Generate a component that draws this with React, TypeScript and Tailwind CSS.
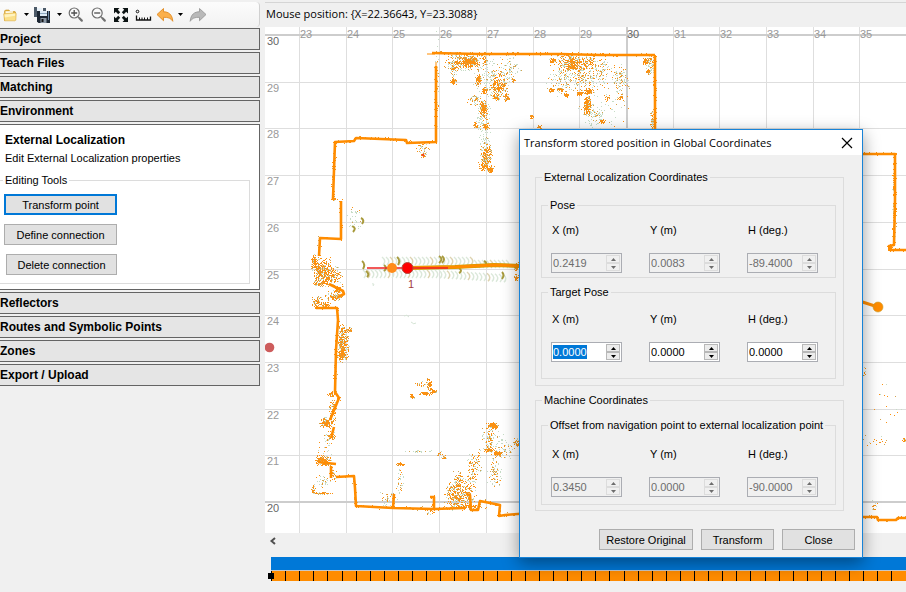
import { useEffect, useLayoutEffect, useRef, useState } from "react";
import type { ReactNode } from "react";

const UI = "font-['Liberation_Sans',Arial,sans-serif]";
const TITLE = "font-['Open_Sans','Noto_Sans',sans-serif] text-[11px] leading-4";

/* ---------- Toolbar icons ---------- */

function FolderIcon() {
  return (
    <svg width="16" height="16" viewBox="0 0 16 16">
      <path d="M2.5 13.5V4l1-1h3.5l1 1.500h5l.5.5v1z" fill="#e3b23c" stroke="#c9962a" strokeWidth=".6" />
      <path d="M3.500 4.200h7.500v3h-7.500z" fill="#fffbe8" />
      <path d="M1.700 6.800l11-1 1.500.6-.4 6.800-.9.600H2.600z" fill="#fbe08a" stroke="#dba93a" strokeWidth=".6" />
      <path d="M2.600 7.600l10.500-.8-.1 2-10.200 1.600z" fill="#fff3c0" />
    </svg>
  );
}

function SaveIcon() {
  return (
    <svg width="18" height="18" viewBox="0 0 18 18">
      <path d="M1 1h3v7h6V2h3v9H1z" fill="#4d5a68" />
      <path d="M4 2h5v5H4z" fill="#e8f1f8" />
      <path d="M4 5h13v12H5.500L4 15.500z" fill="#1d2733" />
      <path d="M7 5h7v5H7z" fill="#dceaf5" />
      <path d="M7 7h7v1H7z" fill="#8fa9c0" />
      <path d="M7.500 12h6v5h-6z" fill="#8c98a5" />
      <path d="M8.500 13h2v3h-2z" fill="#111" />
      <path d="M15 5h1v9h-1z" fill="#6f8aa5" />
    </svg>
  );
}

function ZoomIcon({ plus }: { plus?: boolean }) {
  return (
    <svg width="16" height="16" viewBox="0 0 16 16" fill="none" stroke="#707070">
      <circle cx="6.200" cy="6" r="5" strokeWidth="1.200" fill="#fafafa" />
      <path d="M9.800 9.600l1.800 1.800" strokeWidth="1.300" />
      <path d="M11.500 11.300l2.300 2.300" strokeWidth="2.200" strokeLinecap="round" />
      <path d={plus ? "M3.200 6h6M6.200 3v6" : "M3.200 6h6"} stroke="#505050" strokeWidth="1.300" />
    </svg>
  );
}

function ExpandIcon() {
  return (
    <svg width="16" height="16" viewBox="0 0 16 16" fill="#0c1414">
      <path d="M1 1h5.500L4.800 2.800l2.400 2.400-2 2-2.400-2.400L1 6.500z" />
      <path d="M15 1v5.500l-1.800-1.700-2.400 2.400-2-2 2.400-2.400L9.500 1z" />
      <path d="M1 15V9.500l1.800 1.700 2.400-2.400 2 2-2.400 2.400L6.500 15z" />
      <path d="M15 15H9.500l1.700-1.800-2.400-2.400 2-2 2.400 2.400L15 9.500z" />
    </svg>
  );
}

function RulerIcon() {
  return (
    <svg width="17" height="16" viewBox="0 0 17 16" fill="none" stroke="#111">
      <circle cx="2.500" cy="4.500" r="1.300" />
      <path d="M1.500 8.500v4.500h14V9.500" strokeWidth="1.300" />
      <path d="M4.500 10.500v2.500M7 10.500v2.500M9.500 10.500v2.500M12.500 10.500v2.500" />
    </svg>
  );
}

function CurvedArrow({ flip }: { flip?: boolean }) {
  return (
    <svg width="18" height="16" viewBox="0 0 18 16">
      <path
        d="M1 7.500L7.500 1.500v3.300c5 0 8.700 2.500 9.300 9.500-2-3.200-4.500-4.100-9.300-4v3.400z"
        transform={flip ? "matrix(-1 0 0 1 18 0)" : undefined}
        fill={flip ? "#b9b9b9" : "#fbb04c"}
        stroke={flip ? "#9a9a9a" : "#e08a22"}
        strokeWidth=".9"
        strokeLinejoin="round"
      />
    </svg>
  );
}

function Caret() {
  return (
    <svg width="5" height="3" viewBox="0 0 5 3">
      <path d="M0 0h5L2.500 3z" fill="#000" />
    </svg>
  );
}

function ToolButton({ label, children, className = "" }: { label: string; children: ReactNode; className?: string }) {
  return (
    <button type="button" aria-label={label} className={`flex items-center ${className}`}>
      {children}
    </button>
  );
}

function Toolbar() {
  return (
    <div className="flex h-[25px] w-[260px] items-center rounded-r border-r border-[#d0d0d0] bg-linear-to-b from-[#fcfcfc] to-[#f2f2f2] pl-0.5">
      <ToolButton label="Open"><FolderIcon /></ToolButton>
      <ToolButton label="Open options" className="ml-1.5"><Caret /></ToolButton>
      <ToolButton label="Save" className="ml-1"><SaveIcon /></ToolButton>
      <ToolButton label="Save options" className="ml-1.5"><Caret /></ToolButton>
      <ToolButton label="Zoom in" className="ml-1.5"><ZoomIcon plus /></ToolButton>
      <ToolButton label="Zoom out" className="ml-[7px]"><ZoomIcon /></ToolButton>
      <ToolButton label="Fit to window" className="ml-1.5"><ExpandIcon /></ToolButton>
      <ToolButton label="Measure" className="ml-1.5"><RulerIcon /></ToolButton>
      <ToolButton label="Undo" className="ml-1"><CurvedArrow /></ToolButton>
      <ToolButton label="Undo options" className="ml-1"><Caret /></ToolButton>
      <ToolButton label="Redo" className="ml-1.5"><CurvedArrow flip /></ToolButton>
    </div>
  );
}

/* ---------- Sidebar ---------- */

function SectionHeader({ children }: { children: ReactNode }) {
  return (
    <button
      type="button"
      className="flex h-[22px] w-full items-center border border-l-0 border-[#646464] bg-[#e5e5e5] text-left text-[12px] leading-4 font-bold text-black"
    >
      {children}
    </button>
  );
}

function PushButton({ children, className = "" }: { children: ReactNode; className?: string }) {
  return (
    <button
      type="button"
      className={`flex h-[21px] items-center justify-center bg-[#e1e1e1] text-[11px] leading-4 text-black ${className}`}
    >
      {children}
    </button>
  );
}

function Sidebar() {
  return (
    <aside className="flex w-[260px] shrink-0 flex-col pt-0.5">
      <Toolbar />
      <nav className="mt-px flex flex-col gap-0.5">
        <SectionHeader>Project</SectionHeader>
        <SectionHeader>Teach Files</SectionHeader>
        <SectionHeader>Matching</SectionHeader>
        <SectionHeader>Environment</SectionHeader>
        <section className="h-[166px] border border-l-0 border-[#646464] bg-white pt-[7px]">
          <h2 className="pl-[5px] text-[12px] leading-4 font-bold">External Localization</h2>
          <p className="mt-0.5 pl-[5px] text-[11px] leading-4">Edit External Localization properties</p>
          <fieldset className="mt-[7px] mr-[9px] h-[111px] border border-l-0 border-[#dcdcdc]">
            <legend className="ml-[3px] px-0.5 text-[11px] leading-[14px]">Editing Tools</legend>
            <div className="ml-1 flex w-[113px] flex-col items-end gap-[9px] pt-[7px]">
              <PushButton className="w-full border-2 border-[#0078d7]">Transform point</PushButton>
              <PushButton className="w-full border border-[#adadad]">Define connection</PushButton>
              <PushButton className="w-[111px] border border-[#adadad]">Delete connection</PushButton>
            </div>
          </fieldset>
        </section>
        <SectionHeader>Reflectors</SectionHeader>
        <SectionHeader>Routes and Symbolic Points</SectionHeader>
        <SectionHeader>Zones</SectionHeader>
        <SectionHeader>Export / Upload</SectionHeader>
      </nav>
    </aside>
  );
}

/* ---------- Map ---------- */

function makeRandom(seed: number) {
  let s = seed;
  return () => {
    s = (s * 1664525 + 1013904223) % 4294967296;
    return s / 4294967296;
  };
}

type Wall = [number, number][];

const walls: Wall[] = [
  [[432, 53], [480, 54], [560, 54], [600, 55], [655, 55]],
  [[655, 56], [655, 140]],
  [[436, 66], [436, 142], [407, 143], [406, 140], [356, 138], [354, 141], [335, 142], [334, 170], [333, 199]],
  [[341, 201], [341, 239], [320, 238], [319, 256]],
  [[329, 284], [343, 291], [344, 294], [338, 297]],
  [[316, 308], [337, 308], [338, 320], [336, 350], [335, 392], [339, 398], [330, 420]],
  [[334, 427], [331, 438]],
  [[318, 462], [336, 464]],
  [[331, 466], [331, 478]],
  [[336, 477], [354, 476], [355, 488], [356, 506], [393, 508], [434, 509], [465, 508]],
  [[393, 508], [394, 494]],
  [[434, 509], [434, 497], [430, 497]],
  [[466, 494], [470, 495], [471, 510], [478, 510], [480, 501], [500, 505], [499, 516], [505, 515], [530, 513]],
  [[862, 154], [895, 154], [895, 200], [894, 245], [889, 246], [890, 250], [960, 250]],
  [[862, 517], [877, 517], [878, 520], [896, 520], [898, 518], [960, 518]],
];

/* x, y, half-width, half-height, number of points, share of pale points */
const clusters: [number, number, number, number, number, number][] = [
  [465, 61, 20, 9, 260, 0.3], [470, 62, 9, 5, 130, 0.1], [453, 70, 3, 14, 50, 0.4], [453, 81, 3, 3, 40, 0],
  [478, 79, 3, 6, 60, 0.1], [484, 90, 3, 3, 36, 0], [484, 60, 3, 5, 30, 0.1], [498, 84, 10, 13, 220, 0.25],
  [506, 97, 3, 4, 40, 0], [496, 97, 4, 3, 34, 0.1], [483, 108, 4, 8, 110, 0.1], [475, 100, 8, 6, 40, 0.4],
  [486, 126, 3, 3, 46, 0], [475, 125, 2, 3, 20, 0], [483, 114, 7, 20, 90, 0.7], [513, 80, 2, 2, 14, 0],
  [486, 156, 6, 13, 210, 0.25], [490, 169, 4, 4, 50, 0], [482, 166, 4, 4, 30, 0], [485, 140, 6, 12, 30, 0.8],
  [422, 148, 7, 6, 30, 0.4], [423, 155, 2, 2, 16, 0], [485, 75, 12, 22, 80, 0.8], [510, 68, 14, 14, 60, 0.7],
  [552, 60, 4, 3, 30, 0], [572, 62, 14, 8, 190, 0.2], [588, 62, 7, 6, 60, 0.2], [571, 66, 6, 4, 60, 0],
  [580, 76, 26, 16, 240, 0.45], [551, 90, 3, 2, 26, 0], [560, 89, 3, 2, 26, 0], [566, 95, 3, 2, 26, 0],
  [579, 93, 3, 2, 26, 0], [588, 91, 6, 3, 50, 0], [587, 105, 4, 10, 150, 0.1], [602, 121, 3, 3, 36, 0],
  [607, 98, 3, 3, 16, 0], [620, 80, 9, 15, 90, 0.45], [620, 97, 3, 3, 18, 0], [648, 60, 6, 4, 30, 0.1],
  [648, 71, 2, 3, 20, 0], [644, 61, 2, 3, 20, 0], [650, 66, 5, 10, 50, 0.7], [602, 70, 9, 14, 50, 0.5],
  [531, 117, 2, 2, 18, 0], [539, 127, 2, 3, 16, 0], [594, 115, 10, 14, 60, 0.7], [652, 122, 2, 12, 50, 0.5],
  [604, 108, 25, 20, 40, 0.6], [560, 78, 14, 18, 60, 0.6],
  [322, 271, 10, 13, 270, 0.2], [314, 262, 3, 8, 60, 0.1], [332, 275, 10, 10, 110, 0.15], [321, 283, 8, 3, 60, 0.2],
  [317, 302, 5, 6, 60, 0.1], [333, 296, 9, 5, 70, 0.4], [325, 305, 6, 3, 36, 0.1], [338, 290, 5, 4, 40, 0.1],
  [343, 343, 6, 18, 260, 0.15], [348, 330, 4, 3, 26, 0.1], [341, 355, 5, 6, 50, 0.1],
  [331, 394, 4, 3, 30, 0], [327, 422, 8, 5, 120, 0.1], [332, 410, 4, 10, 50, 0.1], [331, 436, 4, 4, 26, 0.1],
  [326, 440, 8, 18, 28, 0.4], [323, 460, 8, 5, 120, 0.1], [332, 474, 4, 9, 30, 0.2], [322, 481, 8, 7, 24, 0.5],
  [322, 493, 10, 1, 44, 0.1], [313, 489, 2, 4, 16, 0.1],
  [412, 396, 3, 3, 18, 0], [425, 393, 6, 2, 36, 0], [429, 385, 3, 7, 34, 0], [433, 391, 4, 2, 26, 0], [421, 384, 9, 3, 14, 0.3],
  [400, 464, 4, 2, 26, 0], [444, 457, 2, 2, 12, 0], [440, 453, 3, 4, 12, 0.2], [400, 482, 4, 16, 26, 0.6], [388, 500, 8, 8, 30, 0.5],
  [456, 495, 12, 14, 240, 0.25], [458, 480, 5, 11, 60, 0.2], [468, 490, 8, 16, 70, 0.3], [472, 470, 5, 16, 60, 0.3],
  [492, 425, 6, 3, 70, 0], [494, 426, 3, 3, 40, 0], [489, 440, 4, 14, 60, 0.3], [490, 450, 6, 2, 40, 0], [497, 453, 5, 3, 50, 0.1],
  [494, 473, 7, 15, 70, 0.4], [504, 450, 10, 12, 40, 0.4], [518, 442, 5, 4, 60, 0.1], [476, 462, 6, 12, 36, 0.4],
  [492, 437, 12, 15, 40, 0.7], [430, 510, 4, 5, 16, 0.3], [418, 451, 14, 1, 16, 0.7], [467, 506, 18, 2, 60, 0.2],
  [355, 219, 8, 12, 24, 0.7], [516, 266, 3, 5, 34, 0.1], [516, 277, 2, 4, 26, 0.1], [334, 199, 4, 1, 14, 0],
  [890, 248, 3, 3, 26, 0], [894, 195, 2, 40, 70, 0.4], [864, 372, 1, 6, 8, 0], [880, 440, 22, 6, 14, 0.2],
  [890, 400, 16, 26, 12, 0.2], [904, 440, 2, 2, 12, 0], [874, 505, 3, 6, 12, 0.3], [437, 74, 2, 60, 30, 0.6],
];

function buildCloud() {
  const rnd = makeRandom(7);
  const paths = { orange: "", olive: "", pale: "" };
  const dot = (x: number, y: number, tone: keyof typeof paths) => {
    paths[tone] += `M${Math.round(x)} ${Math.round(y)}h1v1h-1z`;
  };
  for (const [cx, cy, rx, ry, count, pale] of clusters) {
    for (let i = 0; i < count * 1.3; i++) {
      const dx = (rnd() + rnd() - 1) * 1.1;
      const dy = (rnd() + rnd() - 1) * 1.1;
      const pick = rnd();
      dot(cx + dx * rx, cy + dy * ry, pick < pale + 0.1 ? "pale" : pick > 0.85 ? "olive" : "orange");
    }
  }
  for (const wall of walls) {
    for (let i = 1; i < wall.length; i++) {
      const [x1, y1] = wall[i - 1];
      const [x2, y2] = wall[i];
      const steps = Math.hypot(x2 - x1, y2 - y1) / 2;
      for (let k = 0; k < steps; k++) {
        const t = k / steps;
        dot(x1 + (x2 - x1) * t + rnd() * 4 - 2.5, y1 + (y2 - y1) * t + rnd() * 4 - 2.5, rnd() < 0.3 ? "olive" : "orange");
      }
    }
  }
  return paths;
}

const cloud = buildCloud();
const PITCH = 46.7;
const ORIGIN_X = 265;
const ORIGIN_Y = 27;
const trail = Array.from({ length: 36 }, (_, i) => 366 + i * 4);

function MapView() {
  const ref = useRef<SVGSVGElement>(null);
  const [size, setSize] = useState({ width: 0, height: 0 });
  useLayoutEffect(() => {
    const el = ref.current;
    if (!el) return;
    const measure = () => {
      const box = el.getBoundingClientRect();
      setSize({ width: box.width, height: box.height });
    };
    measure();
    const observer = new ResizeObserver(measure);
    observer.observe(el);
    return () => observer.disconnect();
  }, []);

  const columnCount = Math.max(0, Math.floor((size.width - 50) / PITCH) + 1);
  const rowCount = Math.max(0, Math.floor((size.height - 18) / PITCH) + 1);
  const columns = Array.from({ length: columnCount }, (_, i) => ({ value: 23 + i, x: Math.round(299 + i * PITCH) }));
  const rows = Array.from({ length: rowCount }, (_, i) => ({ value: 30 - i, y: Math.round(35 + i * PITCH) }));

  return (
    <svg ref={ref} className="min-h-0 w-full flex-1 bg-white text-[11px]" role="img" aria-label="Map">
      <g transform={`translate(${-ORIGIN_X} ${-ORIGIN_Y})`}>
        <g shapeRendering="crispEdges">
          {columns.map((c) => (
            <rect key={c.value} x={c.x} y={ORIGIN_Y} width={c.value % 10 ? 1 : 2} height={size.height} fill={c.value % 10 ? "#dedede" : "#cdcdcd"} />
          ))}
          {rows.map((r) => (
            <rect key={r.value} x={ORIGIN_X} y={r.value % 10 ? r.y : r.y - 1} width={size.width} height={r.value % 10 ? 1 : 2} fill={r.value % 10 ? "#dedede" : "#cdcdcd"} />
          ))}
        </g>
        {columns.map((c) => (
          <text key={c.value} x={c.x + 1} y="38" fill={c.value % 10 ? "#999" : "#666"}>{c.value}</text>
        ))}
        {rows.map((r) => (
          <text key={r.value} x="267" y={r.y + 10} fill={r.value % 10 ? "#999" : "#666"}>{r.value}</text>
        ))}

        <g fill="none">
          {trail.map((x, i) => (
            <g key={x} stroke={i % 5 === 1 ? "#ddd3b0" : "#dbe8da"} strokeWidth="1.500">
              {i > 3 && <path d={`M${x} ${i > 26 ? 260 : 257}q5 4 1 8`} />}
              <path d={`M${x - 3} ${270 + (i > 18 ? (i - 18) / 4 : 0)}q5 4 1 8`} />
            </g>
          ))}
          <path d="M361 218q4 2 1 6M352 226q5 2 1 6M362 261q4 3 1 8M366 271q4 3 1 6M397 257q4 3 1 8M439 256q5 3 0 7M442 256q4 3 0 7M384 265q4 3 0 6M459 268q4 3 0 5M502 272q3 3 0 7M484 261q4 2 1 5" stroke="#a89a3c" strokeWidth="2" />
          <path d="M404 316q3-2 5 1M411 322q3 3 5 1M372 284q3-1 1 2" stroke="#d5e4d5" />
        </g>

        <g shapeRendering="crispEdges">
          <path d={cloud.pale} fill="#c6dcc6" />
          <path d={cloud.olive} fill="#d3a452" />
          <path d={cloud.orange} fill="#fb9112" />
        </g>
        <g fill="none" stroke="#ff8c00" strokeWidth="2.600" strokeLinejoin="round">
          {walls.map((wall, i) => (
            <polyline key={i} points={wall.map((p) => p.join(",")).join(" ")} />
          ))}
        </g>
        <path d="M427 54h8M436 62v5" stroke="#ff8c00" />

        <path d="M408 268L455 267L494 265L522 266" fill="none" stroke="#c9a000" strokeWidth="4" />
        <path d="M408 268L455 267L494 265L522 266M850 298L878 307" fill="none" stroke="#ff8c00" strokeWidth="3" />
        <path d="M367 268h81" stroke="#ee2222" strokeWidth="1.500" />
        <circle cx="392" cy="268" r="5" fill="#ff8c1a" />
        <circle cx="407.500" cy="268" r="5.500" fill="#ff0000" stroke="#b5483c" />
        <circle cx="878" cy="307" r="5" fill="#ff8c00" stroke="#c9a030" strokeWidth=".6" />
        <circle cx="269.500" cy="347.500" r="4.800" fill="#cd5c5c" />
        <circle cx="423" cy="155" r="1.300" fill="#f04a28" />
        <text x="408" y="288" fill="#a03c3c">1</text>
      </g>
    </svg>
  );
}

function Timeline() {
  const ticks = Array.from({ length: 180 }, (_, i) => Math.round(i * 14.1));
  return (
    <div className="h-[35px] w-full pl-1.5">
      <div className="h-[13px] bg-[#0078d7]" />
      <div className="h-px bg-[#c8c8c8]" />
      <svg className="block h-2.5 w-full overflow-visible bg-[#ff8c00]" role="img" aria-label="Recorded frames">
        {ticks.map((x) => (
          <rect key={x} x={x} y="0" width="1" height="10" fill="#000" />
        ))}
        <rect x="-3" y="2" width="6" height="6" fill="#000" />
      </svg>
    </div>
  );
}

/* ---------- Dialog ---------- */

function Spinner({ label, value, disabled, selected }: { label: string; value: string; disabled?: boolean; selected?: boolean }) {
  const [text, setText] = useState(value);
  const ref = useRef<HTMLInputElement>(null);
  useEffect(() => {
    if (selected) {
      ref.current?.focus();
      ref.current?.select();
    }
  }, [selected]);
  const step = (delta: number) => setText((t) => (Number(t) + delta).toFixed(4));
  const arrow = `flex h-2 w-[14px] items-center justify-center border ${disabled ? "border-[#dcdcdc] bg-[#f0f0f0] text-[#6d6d6d]" : "border-[#b8b8b8] bg-[#ececec] text-black"}`;
  return (
    <label className="flex w-[71px] flex-col gap-4 text-[11px] leading-[14px] text-black">
      <span className="pl-px whitespace-nowrap">{label}</span>
      <span className={`flex h-5 items-center border border-[#abadb3] pr-px ${disabled ? "bg-[#f0f0f0]" : "bg-white"}`}>
        <input
          ref={ref}
          value={text}
          disabled={disabled}
          onChange={(e) => setText(e.target.value)}
          className="h-[14px] w-0 min-w-0 flex-1 bg-transparent pl-px text-[11px] leading-[14px] outline-none selection:bg-[#0078d7] selection:text-white disabled:text-[#6d6d6d]"
        />
        <span className="flex flex-col">
          <button type="button" aria-label="Increase" disabled={disabled} onClick={() => step(1)} className={arrow}>
            <svg width="5" height="3" viewBox="0 0 5 3"><path d="M0 3h5L2.500 0z" fill="currentColor" /></svg>
          </button>
          <button type="button" aria-label="Decrease" disabled={disabled} onClick={() => step(-1)} className={arrow}>
            <svg width="5" height="3" viewBox="0 0 5 3"><path d="M0 0h5L2.500 3z" fill="currentColor" /></svg>
          </button>
        </span>
      </span>
    </label>
  );
}

function Group({ title, className = "", children }: { title: string; className?: string; children: ReactNode }) {
  return (
    <fieldset className={`border border-[#dcdcdc] ${className}`}>
      <legend className="ml-1.5 px-0.5 text-[11px] leading-[14px]">{title}</legend>
      {children}
    </fieldset>
  );
}

function Fields({ values, disabled, className = "" }: { values: string[]; disabled?: boolean; className?: string }) {
  return (
    <div className={`flex gap-[27px] pl-[9px] ${className}`}>
      <Spinner label="X (m)" value={values[0]} disabled={disabled} selected={!disabled} />
      <Spinner label="Y (m)" value={values[1]} disabled={disabled} />
      <Spinner label="H (deg.)" value={values[2]} disabled={disabled} />
    </div>
  );
}

function TransformDialog() {
  return (
    <div
      role="dialog"
      aria-labelledby="dialog-title"
      className="absolute top-[129px] left-[519px] w-[344px] border border-[#1883d7] bg-[#f0f0f0] shadow-[0_5px_16px_rgba(0,0,0,0.4)]"
    >
      <div className="flex h-[25px] items-center justify-between bg-white pr-[9px] pl-1">
        <h1 id="dialog-title" className={TITLE}>Transform stored position in Global Coordinates</h1>
        <button type="button" aria-label="Close dialog">
          <svg width="12" height="12" viewBox="0 0 12 12" fill="none" stroke="#000" strokeWidth="1.200">
            <path d="M1 1l10 10M11 1L1 11" />
          </svg>
        </button>
      </div>
      <div className="pt-[15px] pr-[7px] pb-[7px] pl-[15px]">
        <div className="mr-[11px]">
          <Group title="External Localization Coordinates" className="pb-1.5">
            <Group title="Pose" className="mt-3.5 mr-[7px] ml-[5px] pb-1">
              <Fields values={["0.2419", "0.0083", "-89.4000"]} disabled className="pt-[11px]" />
            </Group>
            <Group title="Target Pose" className="mt-[7px] mr-[7px] ml-[5px] pb-4">
              <Fields values={["0.0000", "0.0000", "0.0000"]} className="pt-[13px]" />
            </Group>
          </Group>
          <Group title="Machine Coordinates" className="mt-[7px] pb-[5px]">
            <Group title="Offset from navigation point to external localization point" className="mt-[11px] mr-[7px] ml-[5px] pb-[7px]">
              <Fields values={["0.3450", "0.0000", "-90.0000"]} disabled className="pt-[15px]" />
            </Group>
          </Group>
        </div>
        <div className="mt-[18px] flex justify-end gap-2">
          <PushButton className="w-[94px] border border-[#adadad]">Restore Original</PushButton>
          <PushButton className="w-[73px] border border-[#adadad]">Transform</PushButton>
          <PushButton className="w-[73px] border border-[#adadad]">Close</PushButton>
        </div>
      </div>
    </div>
  );
}

export default function App() {
  return (
    <div className={`relative flex h-screen w-full gap-[5px] overflow-hidden bg-[#f0f0f0] text-black ${UI}`}>
      <Sidebar />
      <main className="flex min-w-0 flex-1 flex-col">
        <header className="flex h-[27px] shrink-0 flex-col pt-0.5">
          <div className="h-px bg-[#d5d5d5]" />
          <p className={`pt-[3px] pl-px ${TITLE}`}>{"Mouse position: {X=22.36643, Y=23.3088}"}</p>
        </header>
        <MapView />
        <div className="flex h-6 shrink-0 items-start pt-1 pl-1">
          <button type="button" aria-label="Scroll left">
            <svg width="8" height="8" viewBox="0 0 8 8" fill="none" stroke="#505050" strokeWidth="2">
              <path d="M6 1L2.500 4L6 7" />
            </svg>
          </button>
        </div>
        <Timeline />
      </main>
      <TransformDialog />
    </div>
  );
}
